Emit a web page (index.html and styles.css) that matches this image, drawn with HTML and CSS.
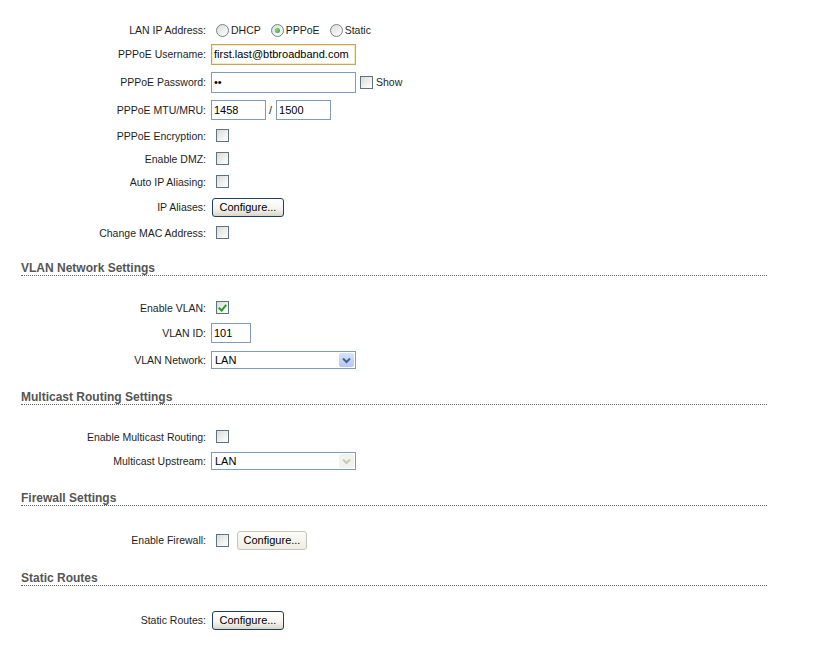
FILE: index.html
```html
<!DOCTYPE html>
<html lang="en">
<head>
    <meta charset="UTF-8">
    <title>Network Settings</title>
    <link rel="stylesheet" href="styles.css">
</head>
<body>
    <div class="page">
        <!-- LAN settings -->
        <div class="row short">
            <span class="lbl">LAN IP Address:</span>
            <div class="ctl">
                <label class="opt first"><input type="radio" class="radio" name="ipmode"><span>DHCP</span></label>
                <label class="opt"><input type="radio" class="radio" name="ipmode" checked><span>PPPoE</span></label>
                <label class="opt"><input type="radio" class="radio" name="ipmode"><span>Static</span></label>
            </div>
        </div>
        <div class="row tall">
            <span class="lbl">PPPoE Username:</span>
            <div class="ctl"><input type="text" class="txt wide focus" value="first.last@btbroadband.com"></div>
        </div>
        <div class="row tall">
            <span class="lbl">PPPoE Password:</span>
            <div class="ctl">
                <input type="password" class="txt wide" value="ab">
                <label class="show"><input type="checkbox" class="check"><span>Show</span></label>
            </div>
        </div>
        <div class="row tall">
            <span class="lbl">PPPoE MTU/MRU:</span>
            <div class="ctl">
                <input type="text" class="txt mtu" value="1458">
                <span class="slash">/</span>
                <input type="text" class="txt mtu" value="1500">
            </div>
        </div>
        <div class="row">
            <span class="lbl">PPPoE Encryption:</span>
            <div class="ctl"><input type="checkbox" class="check"></div>
        </div>
        <div class="row">
            <span class="lbl">Enable DMZ:</span>
            <div class="ctl"><input type="checkbox" class="check"></div>
        </div>
        <div class="row">
            <span class="lbl">Auto IP Aliasing:</span>
            <div class="ctl"><input type="checkbox" class="check"></div>
        </div>
        <div class="row tall">
            <span class="lbl">IP Aliases:</span>
            <div class="ctl"><button class="btn">Configure...</button></div>
        </div>
        <div class="row">
            <span class="lbl">Change MAC Address:</span>
            <div class="ctl"><input type="checkbox" class="check"></div>
        </div>

        <!-- VLAN -->
        <h3 class="section">VLAN Network Settings</h3>
        <div class="row">
            <span class="lbl">Enable VLAN:</span>
            <div class="ctl"><input type="checkbox" class="check" checked></div>
        </div>
        <div class="row tall">
            <span class="lbl">VLAN ID:</span>
            <div class="ctl"><input type="text" class="txt vid" value="101"></div>
        </div>
        <div class="row sel">
            <span class="lbl">VLAN Network:</span>
            <div class="ctl">
                <div class="select">
                    <span class="value">LAN</span>
                    <span class="arrow">
                        <svg width="9" height="7" viewBox="0 0 9 7"><path d="M1 1.5 L4.5 5 L8 1.5" fill="none" stroke="#4d6185" stroke-width="2"/></svg>
                    </span>
                </div>
            </div>
        </div>

        <!-- Multicast -->
        <h3 class="section">Multicast Routing Settings</h3>
        <div class="row">
            <span class="lbl">Enable Multicast Routing:</span>
            <div class="ctl"><input type="checkbox" class="check"></div>
        </div>
        <div class="row sel">
            <span class="lbl">Multicast Upstream:</span>
            <div class="ctl">
                <div class="select disabled">
                    <span class="value">LAN</span>
                    <span class="arrow">
                        <svg width="9" height="7" viewBox="0 0 9 7"><path d="M1 1.5 L4.5 5 L8 1.5" fill="none" stroke="#c9c7ba" stroke-width="2"/></svg>
                    </span>
                </div>
            </div>
        </div>

        <!-- Firewall -->
        <h3 class="section">Firewall Settings</h3>
        <div class="row tall">
            <span class="lbl">Enable Firewall:</span>
            <div class="ctl">
                <input type="checkbox" class="check">
                <button class="btn soft">Configure...</button>
            </div>
        </div>

        <!-- Routes -->
        <h3 class="section">Static Routes</h3>
        <div class="row tall">
            <span class="lbl">Static Routes:</span>
            <div class="ctl"><button class="btn">Configure...</button></div>
        </div>
    </div>
</body>
</html>
```
FILE: styles.css
```css
body {
    margin: 0;
    background: #fff;
    font-family: "Liberation Sans", Arial, sans-serif;
    color: #1e1e1e;
}
.page {
    width: 746px;
    padding: 20px 0 0 21px;
}
.row {
    display: grid;
    grid-template-columns: 185px auto;
    column-gap: 5px;
    align-items: center;
    height: 23px;
}
.row.short { height: 20px; }
.row.tall { height: 28px; }
.row.sel { height: 26px; }
.lbl {
    text-align: right;
    font-size: 10.5px;
    white-space: nowrap;
}
.ctl {
    display: flex;
    align-items: center;
    font-size: 10.5px;
}
.section {
    margin: 17px 0 20px;
    font-size: 12px;
    line-height: 14px;
    font-weight: bold;
    color: #555;
    border-bottom: 1px dotted #666;
}

/* radios */
.opt {
    display: flex;
    align-items: center;
    margin-left: 10px;
}
.opt.first { margin-left: 5px; }
.opt span { margin-left: 2px; }
.radio {
    appearance: none;
    -webkit-appearance: none;
    margin: 0;
    width: 13px;
    height: 13px;
    border: 1px solid #6f8193;
    border-radius: 50%;
    background: linear-gradient(135deg, #dcdcd5, #fff);
    position: relative;
}
.radio:checked::after {
    content: "";
    position: absolute;
    left: 3px;
    top: 3px;
    width: 5px;
    height: 5px;
    border-radius: 50%;
    background: radial-gradient(circle at 40% 40%, #7ae07a, #21a121);
}

/* checkboxes */
.check {
    appearance: none;
    -webkit-appearance: none;
    margin: 0 0 0 5px;
    width: 13px;
    height: 13px;
    border: 1px solid #5d7187;
    background: linear-gradient(135deg, #dcdcd5, #fff);
    position: relative;
}
.check:checked::after {
    content: "";
    position: absolute;
    left: 3px;
    top: 1px;
    width: 3px;
    height: 6px;
    border-right: 2px solid #21a121;
    border-bottom: 2px solid #21a121;
    transform: rotate(40deg);
}
.show {
    display: flex;
    align-items: center;
}
.show .check { margin-left: 4px; }
.show span { margin-left: 3px; }

/* text inputs */
.txt {
    box-sizing: border-box;
    height: 20px;
    margin: 0;
    padding: 0 2px;
    border: 1px solid #7f9db9;
    font-family: "Liberation Sans", Arial, sans-serif;
    font-size: 11px;
    color: #000;
    outline: none;
}
.txt.wide { width: 145px; height: 21px; }
.txt.focus {
    border-color: #c9a458;
    box-shadow: inset 0 0 0 1px #f7e9bf;
}
.txt.mtu { width: 55px; }
.txt.vid { width: 40px; }
.slash {
    margin: 0 4px 0 3px;
    font-size: 11px;
}

/* select */
.select {
    box-sizing: border-box;
    width: 145px;
    height: 18px;
    border: 1px solid #7f9db9;
    display: flex;
    align-items: center;
    justify-content: space-between;
    font-size: 11px;
    color: #000;
}
.select .value { margin-left: 3px; }
.select .arrow {
    width: 15px;
    height: 14px;
    margin-right: 1px;
    display: flex;
    align-items: center;
    justify-content: center;
    border-radius: 2px;
    background: linear-gradient(#d6e2fc, #b4c8f6);
}
.select.disabled .arrow {
    background: #f3f3ee;
}

/* buttons */
.btn {
    box-sizing: border-box;
    width: 72px;
    height: 19px;
    margin: 0 0 0 1px;
    padding: 0;
    border: 1px solid #1f3f5e;
    border-radius: 3px;
    background: linear-gradient(#fff, #f4f3ee 60%, #d9d5c8);
    font-family: "Liberation Sans", Arial, sans-serif;
    font-size: 11px;
    color: #000;
}
.btn.soft {
    width: 70px;
    margin-left: 8px;
    border-color: #c7c5b7;
    background: linear-gradient(#fbfbf8, #efede3);
}
```
